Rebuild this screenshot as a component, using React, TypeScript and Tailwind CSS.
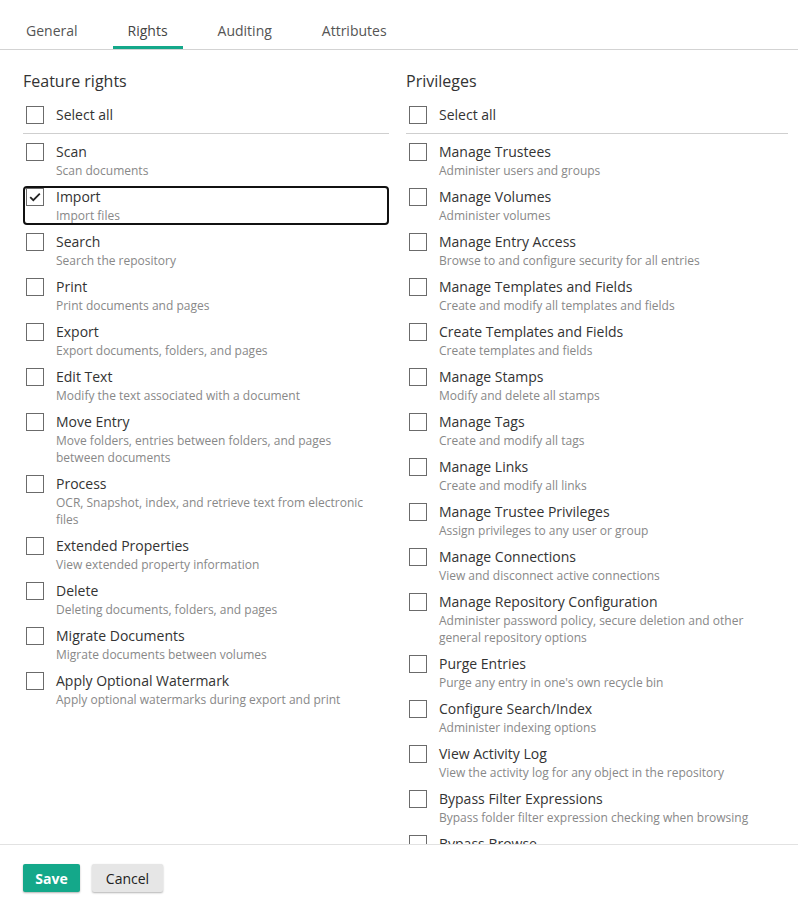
import React from "react";

type Right = { title: string; desc: string; checked?: boolean; focused?: boolean };

const featureRights: Right[] = [
  { title: "Scan", desc: "Scan documents" },
  { title: "Import", desc: "Import files", checked: true, focused: true },
  { title: "Search", desc: "Search the repository" },
  { title: "Print", desc: "Print documents and pages" },
  { title: "Export", desc: "Export documents, folders, and pages" },
  { title: "Edit Text", desc: "Modify the text associated with a document" },
  { title: "Move Entry", desc: "Move folders, entries between folders, and pages between documents" },
  { title: "Process", desc: "OCR, Snapshot, index, and retrieve text from electronic files" },
  { title: "Extended Properties", desc: "View extended property information" },
  { title: "Delete", desc: "Deleting documents, folders, and pages" },
  { title: "Migrate Documents", desc: "Migrate documents between volumes" },
  { title: "Apply Optional Watermark", desc: "Apply optional watermarks during export and print" },
];

const privileges: Right[] = [
  { title: "Manage Trustees", desc: "Administer users and groups" },
  { title: "Manage Volumes", desc: "Administer volumes" },
  { title: "Manage Entry Access", desc: "Browse to and configure security for all entries" },
  { title: "Manage Templates and Fields", desc: "Create and modify all templates and fields" },
  { title: "Create Templates and Fields", desc: "Create templates and fields" },
  { title: "Manage Stamps", desc: "Modify and delete all stamps" },
  { title: "Manage Tags", desc: "Create and modify all tags" },
  { title: "Manage Links", desc: "Create and modify all links" },
  { title: "Manage Trustee Privileges", desc: "Assign privileges to any user or group" },
  { title: "Manage Connections", desc: "View and disconnect active connections" },
  { title: "Manage Repository Configuration", desc: "Administer password policy, secure deletion and other general repository options" },
  { title: "Purge Entries", desc: "Purge any entry in one's own recycle bin" },
  { title: "Configure Search/Index", desc: "Administer indexing options" },
  { title: "View Activity Log", desc: "View the activity log for any object in the repository" },
  { title: "Bypass Filter Expressions", desc: "Bypass folder filter expression checking when browsing" },
  { title: "Bypass Browse", desc: "Browse entries without Browse rights" },
];

const tabs = ["General", "Rights", "Auditing", "Attributes"];

function Checkbox({ checked }: { checked?: boolean }) {
  return (
    <span className="flex h-[18px] w-[18px] shrink-0 items-center justify-center border border-[#6b6b6b] bg-white">
      {checked && (
        <svg width="12" height="10" viewBox="0 0 12 10" fill="none">
          <path d="M1.2 5.2 L4.3 8.2 L10.8 1.6" stroke="#222" strokeWidth="1.8" />
        </svg>
      )}
    </span>
  );
}

function Section({ heading, items }: { heading: string; items: Right[] }) {
  return (
    <div>
      <h2 className="text-[16px] leading-[22px] text-[#333]">{heading}</h2>
      <div className="mt-[12px] box-content flex h-[22px] items-center gap-[12px] border-b border-[#cfcfcf] pb-[7px] pl-[3px]">
        <Checkbox />
        <span className="text-[14px] leading-[20px] text-[#333]">Select all</span>
      </div>
      <div className="mt-[7px] flex flex-col gap-[6px]">
        {items.map((item) => (
          <div
            key={item.title}
            className={
              "flex gap-[12px] rounded-[4px] border-2 pl-[1px] " +
              (item.focused ? "border-[#111]" : "border-transparent")
            }
          >
            <Checkbox checked={item.checked} />
            <div className="min-w-0 pr-[20px]">
              <div className="text-[14px] leading-[18px] text-[#333]">{item.title}</div>
              <div className="-mb-px mt-px text-[12px] leading-[17px] text-[#888]">{item.desc}</div>
            </div>
          </div>
        ))}
      </div>
    </div>
  );
}

export default function App() {
  return (
    <div className="flex h-[912px] w-[798px] flex-col bg-white font-['Open_Sans',sans-serif]">
      <div className="flex h-[50px] shrink-0 gap-5 border-b border-[#d3d3d3] pl-[11px]">
        {tabs.map((tab) => (
          <div
            key={tab}
            className={
              "h-[49px] border-b-[3px] px-[15px] pt-[20px] text-[14px] leading-[22px] " +
              (tab === "Rights" ? "border-[#14a88a] text-[#444]" : "border-transparent text-[#555]")
            }
          >
            {tab}
          </div>
        ))}
      </div>

      <div className="min-h-0 flex-1 overflow-hidden border-b border-[#e2e2e2]">
        <div className="grid grid-cols-[366px_382px] gap-x-[17px] pl-[23px] pt-[20px]">
          <Section heading="Feature rights" items={featureRights} />
          <Section heading="Privileges" items={privileges} />
        </div>
      </div>

      <div className="flex h-[67px] shrink-0 items-start gap-[12px] pl-[23px] pt-[19px]">
        <button className="h-[28px] w-[57px] rounded-[2px] bg-[#14a88a] text-[14px] font-bold text-white shadow-[0_1px_2px_rgba(0,0,0,0.3)]">
          Save
        </button>
        <button className="h-[28px] w-[71px] rounded-[2px] bg-[#e6e6e6] text-[14px] text-[#222] shadow-[0_1px_2px_rgba(0,0,0,0.3)]">
          Cancel
        </button>
      </div>
    </div>
  );
}
